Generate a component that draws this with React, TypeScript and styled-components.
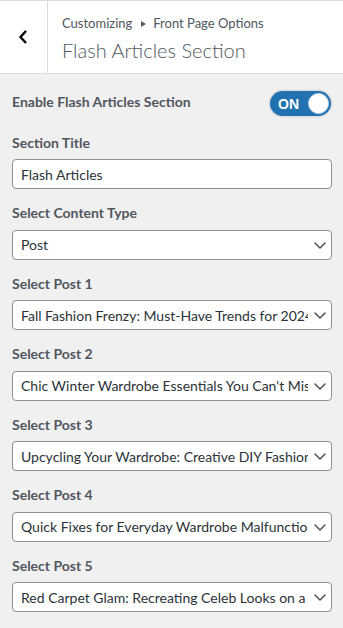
import styled, { createGlobalStyle } from 'styled-components';

const GlobalStyle = createGlobalStyle`
    html, body {
        margin: 0;
        padding: 0;
        background: #f0f0f1;
    }
    body {
        font-family: Lato, "Liberation Sans", sans-serif;
        -webkit-font-smoothing: antialiased;
    }
    * {
        box-sizing: border-box;
    }
`;

const posts = [
    'Fall Fashion Frenzy: Must-Have Trends for 2024',
    "Chic Winter Wardrobe Essentials You Can't Miss",
    'Upcycling Your Wardrobe: Creative DIY Fashion Ideas',
    'Quick Fixes for Everyday Wardrobe Malfunctions',
    'Red Carpet Glam: Recreating Celeb Looks on a Budget',
];

const Chevron = () => (
    <svg width="16" height="16" viewBox="0 0 16 16" fill="none">
        <polyline
            points="3,6 8,11 13,6"
            stroke="#50575e"
            strokeWidth="1.6"
            strokeLinecap="round"
            strokeLinejoin="round"
        />
    </svg>
);

const SelectField = ({ value, options }: { value: string; options: string[] }) => (
    <SelectWrap>
        <Select defaultValue={value}>
            {options.map((o) => (
                <option key={o}>{o}</option>
            ))}
        </Select>
        <ArrowIcon>
            <Chevron />
        </ArrowIcon>
    </SelectWrap>
);

export default function App() {
    return (
        <>
            <GlobalStyle />
            <Panel>
                <Header>
                    <BackButton aria-label="Back">
                        <svg width="10" height="14" viewBox="0 0 10 14" fill="none">
                            <polyline
                                points="8,1 2.5,7 8,13"
                                stroke="#000"
                                strokeWidth="2.4"
                                strokeLinejoin="miter"
                            />
                        </svg>
                    </BackButton>
                    <TitleBlock>
                        <Breadcrumb>
                            Customizing
                            <Arrow />
                            Front Page Options
                        </Breadcrumb>
                        <SectionTitle>Flash Articles Section</SectionTitle>
                    </TitleBlock>
                </Header>

                <Controls>
                    <ToggleRow>
                        <Label>Enable Flash Articles Section</Label>
                        <Toggle>
                            <ToggleText>ON</ToggleText>
                            <Knob />
                        </Toggle>
                    </ToggleRow>

                    <Control>
                        <Label>Section Title</Label>
                        <TextInput defaultValue="Flash Articles" />
                    </Control>

                    <Control>
                        <Label>Select Content Type</Label>
                        <SelectField value="Post" options={['Post', 'Page', 'Category']} />
                    </Control>

                    {posts.map((p, i) => (
                        <Control key={p}>
                            <Label>Select Post {i + 1}</Label>
                            <SelectField value={p} options={posts} />
                        </Control>
                    ))}
                </Controls>
            </Panel>
        </>
    );
}

const Panel = styled.div`
    width: 343px;
    min-height: 628px;
    background: #f0f0f1;
    color: #50575e;
`;

const Header = styled.div`
    display: flex;
    height: 74px;
    background: #fff;
    border-top: 1px solid #dcdcde;
    border-bottom: 1px solid #dcdcde;
`;

const BackButton = styled.button`
    width: 48px;
    flex: none;
    display: flex;
    align-items: center;
    justify-content: center;
    padding: 0 1px 0 0;
    background: #fff;
    border: none;
    border-right: 1px solid #dcdcde;
    cursor: pointer;
`;

const TitleBlock = styled.div`
    display: flex;
    flex-direction: column;
    padding: 14px 10px 0 14px;
    gap: 6px;
`;

const Breadcrumb = styled.span`
    display: flex;
    align-items: center;
    font-size: 13px;
    line-height: 16px;
    color: #50575e;
`;

const Arrow = styled.span`
    width: 0;
    height: 0;
    margin: 1px 7px 0 9px;
    border-left: 5px solid #50575e;
    border-top: 3px solid transparent;
    border-bottom: 3px solid transparent;
`;

const SectionTitle = styled.h3`
    margin: 0;
    font-size: 20px;
    line-height: 26px;
    font-weight: 300;
    color: #50575e;
`;

const Controls = styled.div`
    display: flex;
    flex-direction: column;
    gap: 12px;
    padding: 16px 11px 12px 12px;
`;

const Control = styled.div`
    display: flex;
    flex-direction: column;
    gap: 4px;
`;

const ToggleRow = styled.div`
    display: flex;
    align-items: flex-start;
    justify-content: space-between;
    height: 28.5px;
`;

const Label = styled.span`
    display: block;
    font-size: 14px;
    line-height: 24.5px;
    font-weight: 700;
    color: #50575e;
`;

const Toggle = styled.div`
    display: flex;
    align-items: center;
    justify-content: space-between;
    width: 61px;
    height: 25px;
    margin: 1px 1px 0 0;
    padding: 0 2px 0 8px;
    border-radius: 13px;
    background: #2271b1;
    box-shadow: 0 0 0 1.5px #dcdcde;
`;

const ToggleText = styled.span`
    font-family: "Liberation Sans", Arial, sans-serif;
    font-size: 14px;
    font-weight: 700;
    color: #fff;
`;

const Knob = styled.span`
    width: 21px;
    height: 21px;
    border-radius: 50%;
    background: #fff;
    border: 1px solid #c5d9ea;
`;

const fieldBase = `
    width: 100%;
    height: 30px;
    margin: 0;
    border: 1px solid #8c8f94;
    border-radius: 4px;
    background: #fff;
    font-family: Lato, "Liberation Sans", sans-serif;
    font-size: 14px;
    color: #2c3338;
    outline: none;
`;

const TextInput = styled.input`
    ${fieldBase}
    padding: 0 8px;
`;

const SelectWrap = styled.div`
    position: relative;
`;

const Select = styled.select`
    ${fieldBase}
    appearance: none;
    -webkit-appearance: none;
    padding: 0 23px 0 8px;
    text-overflow: clip;
    white-space: nowrap;
`;

const ArrowIcon = styled.span`
    position: absolute;
    right: 4px;
    top: 7px;
    display: flex;
    pointer-events: none;
`;
